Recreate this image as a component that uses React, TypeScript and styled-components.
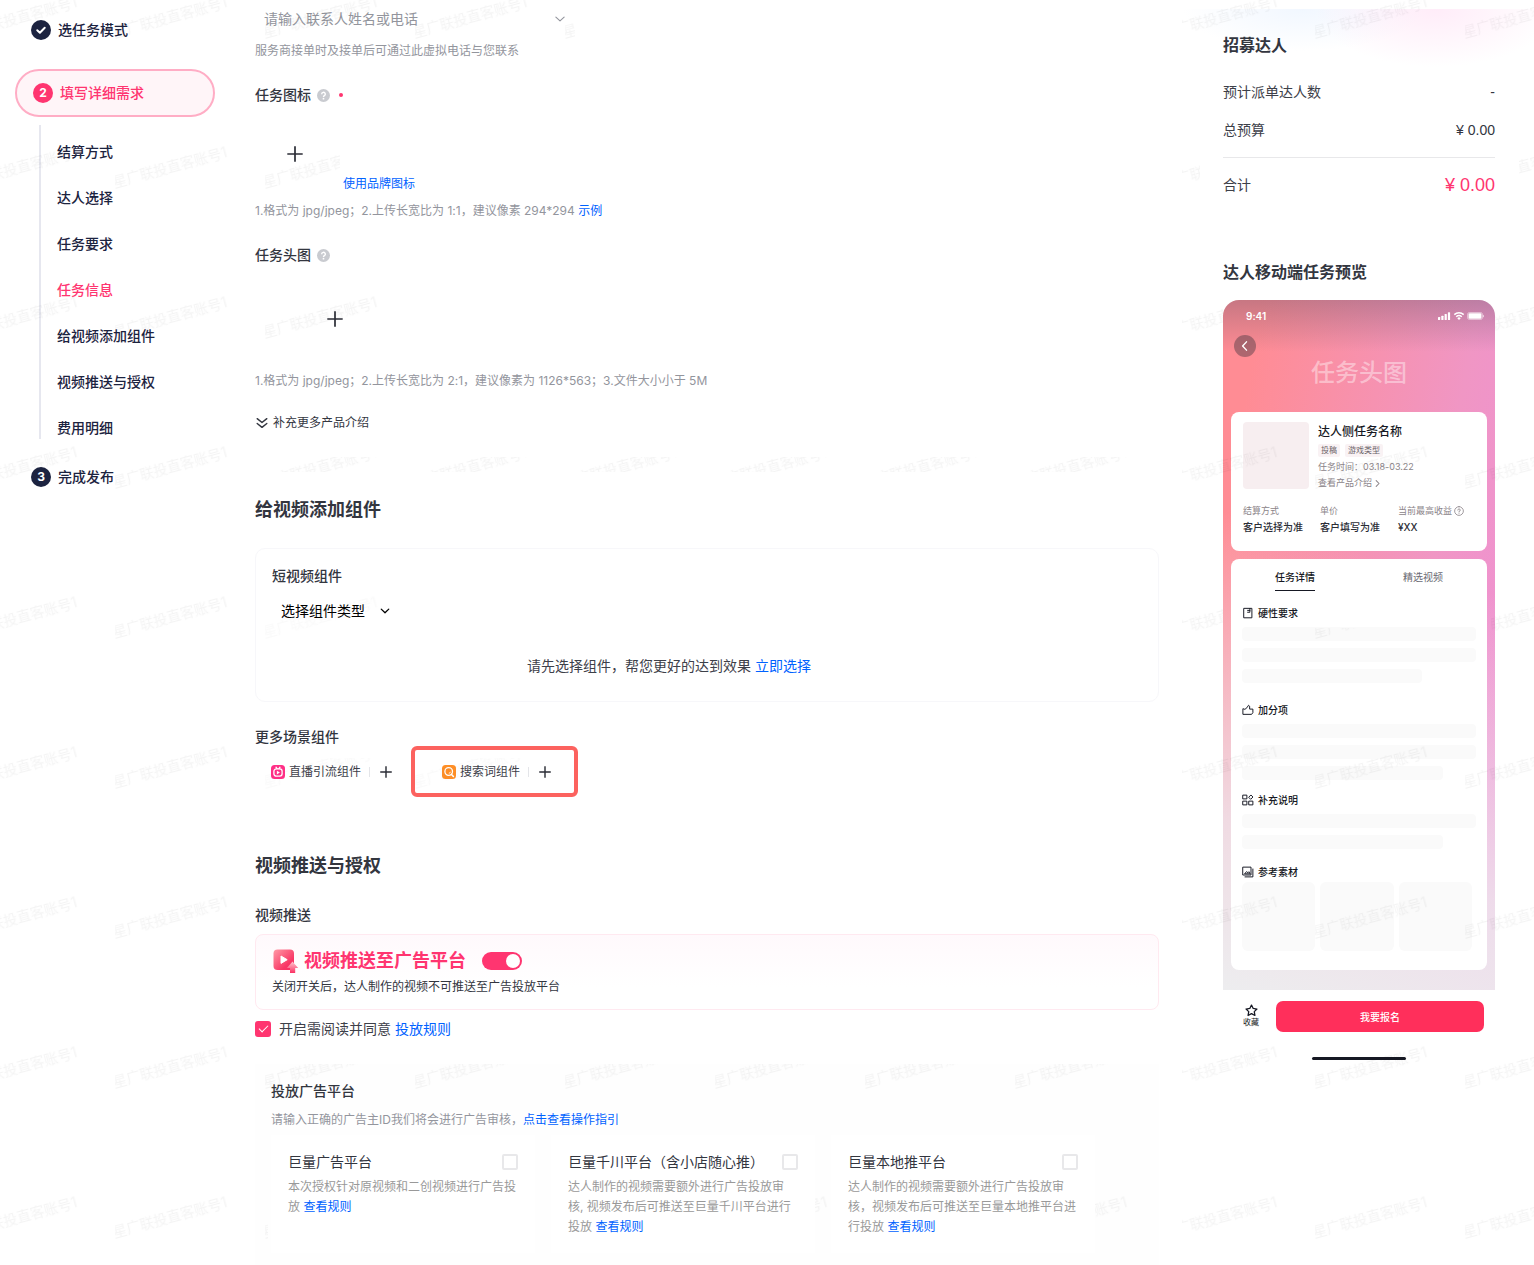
import React, { useState } from "react";
import styled, { createGlobalStyle, css } from "styled-components";

const C = {
  ink: "#1c2340",
  text: "#33363f",
  body: "#3d4049",
  muted: "#93959d",
  gray: "#999999",
  pink: "#ff3570",
  blue: "#0062ff",
  block: "#fafafa",
};

const GlobalStyle = createGlobalStyle`
  * { box-sizing: border-box; }
  body {
    margin: 0;
    background: #fff;
    color: ${C.text};
    font-family: Inter, "Noto Sans CJK SC", sans-serif;
    font-size: 14px;
    font-variant-ligatures: no-contextual;
    line-height: 22px;
  }
  h1, h2, h3, h4, p, ul, ol, dl, dd { margin: 0; padding: 0; }
  ul, ol { list-style: none; }
  button, select, input { font: inherit; color: inherit; }
  button { border: 0; padding: 0; background: none; cursor: pointer; }
  a { color: ${C.blue}; text-decoration: none; }
  svg { display: block; flex: none; }
`;

const Page = styled.div`
  position: relative;
  overflow: hidden;
  display: grid;
  grid-template-columns: 240px minmax(0, 1fr) 351px;
  align-items: start;
`;

/* ---------- Watermark ---------- */

const MarkLayer = styled.div`
  position: absolute;
  z-index: 2;
  top: -110px;
  left: -35px;
  display: grid;
  grid-template-columns: repeat(11, 150px);
  grid-auto-rows: 150px;
  pointer-events: none;
  user-select: none;
`;

const MarkCell = styled.div<{ $clip: string; $faint: boolean }>`
  display: flex;
  align-items: flex-end;
  clip-path: ${(p) => (p.$clip ? `inset(${p.$clip})` : "none")};
  color: #000;
  opacity: ${(p) => (p.$faint ? 0.02 : 0.045)};
  span {
    line-height: 16px;
    white-space: nowrap;
    transform: rotate(-15deg);
    transform-origin: left bottom;
    will-change: transform;
  }
`;

/* Cells of the form column that stay visible: "row-column" -> clip */
const FORM_MARKS: Record<string, string> = {
  "0-2": "0",
  "0-3": "0",
  "0-4": "0 140px 0 0",
  "1-2": "0 75px 0 0",
  "2-2": "0",
  "4-2": "0",
  "5-2": "118px 0 0 0",
  "5-3": "118px 0 0 0",
  "8-2": "0 147px 0 0",
  "8-5": "0 0 0 100px",
  "8-7": "0 0 0 80px",
};

const ASIDE_MARKS: Record<string, string> = {
  "1-8": "0 115px 0 17px",
  "1-9": "none",
  "1-10": "0 0 0 54px",
  "2-8": "0 92px 0 17px",
  "2-9": "none",
  "2-10": "0 0 0 30px",
  "4-8": "0 92px 0 17px",
  "4-9": "138px 0 0 0",
  "4-10": "0 0 0 26px",
};

function markClip(row: number, col: number): string | null {
  if (col < 2) return "0";
  const key = `${row}-${col}`;
  if (col < 8) {
    if (row === 3) return "117px 0 18px 0";
    if (row === 7) return "124px 0 0 0";
    return FORM_MARKS[key] ?? null;
  }
  const own = ASIDE_MARKS[key];
  if (own) return own === "none" ? null : own;
  return col === 8 ? "0 0 0 17px" : "0";
}

function Watermark() {
  const cells = [];
  for (let row = 0; row < 9; row++) {
    for (let col = 0; col < 11; col++) {
      const clip = markClip(row, col);
      cells.push(
        <MarkCell key={`${row}-${col}`} $clip={clip ?? ""} $faint={col > 1 && (row === 4 || row === 5) && col < 8}>
          {clip !== null && <span>星广联投直客账号1</span>}
        </MarkCell>
      );
    }
  }
  return <MarkLayer aria-hidden="true">{cells}</MarkLayer>;
}

/* ---------- Sidebar ---------- */

const Sidebar = styled.nav`
  padding: 19px 25px 0 15px;
  color: ${C.ink};
  font-weight: 500;
`;

const Step = styled.div<{ $last?: boolean }>`
  display: flex;
  align-items: center;
  gap: 7px;
  padding-left: 16px;
  margin-top: ${(p) => (p.$last ? 27 : 0)}px;
`;

const ActiveStep = styled(Step)`
  height: 48px;
  margin: 28px 0 8px;
  border: 2px solid #ffadc5;
  border-radius: 24px;
  background: #fff5f8;
  color: ${C.pink};
`;

const StepBadge = styled.span<{ $active?: boolean }>`
  display: grid;
  place-items: center;
  width: 20px;
  height: 20px;
  border-radius: 50%;
  background: ${(p) => (p.$active ? C.pink : C.ink)};
  color: #fff;
  font-size: 12px;
  font-weight: 700;
  line-height: 20px;
`;

const SubSteps = styled.ul`
  display: grid;
  gap: 24px;
  margin-left: 24px;
  padding: 16px 0 0 16px;
  border-left: 2px solid #e6e7ef;
`;

const SubLink = styled.a<{ $active?: boolean }>`
  color: ${(p) => (p.$active ? C.pink : C.ink)};
`;

const SUB_STEPS = ["结算方式", "达人选择", "任务要求", "任务信息", "给视频添加组件", "视频推送与授权", "费用明细"];

/* ---------- Form ---------- */

const Main = styled.main`
  display: grid;
  gap: 16px;
  padding: 0 24px 12px 15px;
`;

const Section = styled.section<{ $first?: boolean }>`
  padding: ${(p) => (p.$first ? "3px 0 22px" : "25px 0 24px")};
`;

const LastSection = styled(Section)`
  padding-bottom: 0;
`;

const SectionTitle = styled.h2`
  font-size: 18px;
  line-height: 26px;
  font-weight: 700;
`;

const Label = styled.h3<{ $top?: number }>`
  display: flex;
  align-items: center;
  gap: 6px;
  margin-top: ${(p) => p.$top ?? 0}px;
  font-size: 14px;
  font-weight: 500;
`;

const RequiredDot = styled.i`
  width: 4px;
  height: 4px;
  margin-left: 3px;
  border-radius: 50%;
  background: ${C.pink};
`;

const Picker = styled.label<{ $wide?: boolean }>`
  display: flex;
  align-items: center;
  width: ${(p) => (p.$wide ? "320px" : "128px")};
  height: 32px;
  padding: 0 9px;
  margin-top: ${(p) => (p.$wide ? 0 : 8)}px;
  color: ${(p) => (p.$wide ? C.muted : "#000")};
  select {
    flex: 1;
    min-width: 0;
    border: 0;
    padding: 0;
    background: none;
    appearance: none;
    outline: none;
  }
`;

const Hint = styled.p<{ $top?: number }>`
  margin-top: ${(p) => p.$top ?? 0}px;
  color: ${C.muted};
  font-size: 12px;
  line-height: 20px;
`;

const UploadRow = styled.div`
  display: flex;
  align-items: flex-end;
  gap: 8px;
  margin: 8px 0 7px;
  font-size: 12px;
  line-height: 20px;
`;

const UploadBox = styled.button<{ $banner?: boolean }>`
  display: grid;
  place-items: center;
  width: ${(p) => (p.$banner ? 160 : 80)}px;
  height: ${(p) => (p.$banner ? 90 : 80)}px;
`;

const MoreToggle = styled.button`
  display: flex;
  align-items: center;
  gap: 4px;
  margin-top: 21px;
  font-size: 12px;
  line-height: 22px;
`;

const ComponentCard = styled.div`
  margin-top: 25px;
  padding: 16px;
  border: 1px solid #f7f7fa;
  border-radius: 10px;
`;

const EmptyLine = styled.p`
  max-width: 794px;
  padding: 28px 0 8px;
  color: ${C.body};
  text-align: center;
`;

const ChipRow = styled.div`
  display: flex;
  gap: 18px;
  margin-top: 8px;
`;

const Chip = styled.div`
  position: relative;
  display: flex;
  align-items: center;
  height: 32px;
  padding: 0 16px;
  color: ${C.body};
  font-size: 12px;
  > span { margin-left: 4px; }
  > i {
    width: 1px;
    height: 10px;
    margin: 0 10px 0 8px;
    background: #e4e5e9;
  }
`;

const FocusFrame = styled.div`
  position: absolute;
  inset: -10px -11px -9px -15px;
  border: 4px solid #fc625f;
  border-radius: 6px;
  pointer-events: none;
`;

const PushCard = styled.div`
  margin-top: 8px;
  padding: 13px 16px 12px;
  border: 1px solid #ffe9f0;
  border-radius: 8px;
  background: linear-gradient(180deg, #fff9fc, #fff 70%);
  p {
    margin-top: 3px;
    color: ${C.text};
    font-size: 12px;
    line-height: 20px;
  }
`;

const PushTitle = styled.div`
  display: flex;
  align-items: center;
  gap: 5px;
  h4 {
    color: ${C.pink};
    font-size: 18px;
    line-height: 26px;
    font-weight: 700;
  }
`;

const Switch = styled.input`
  appearance: none;
  width: 40px;
  height: 18px;
  margin: 0 0 0 11px;
  padding: 2px;
  border-radius: 9px;
  background: #d0d2d8;
  cursor: pointer;
  &::before {
    content: "";
    display: block;
    width: 14px;
    height: 14px;
    border-radius: 50%;
    background: #fff;
  }
  &:checked { background: ${C.pink}; }
  &:checked::before { margin-left: 22px; }
`;

const Tick = styled.input`
  appearance: none;
  flex: none;
  display: grid;
  place-items: center;
  width: 16px;
  height: 16px;
  margin: 0;
  border: 2px solid #e8e8ea;
  border-radius: 2px;
  background: #fff;
  &:checked {
    border-radius: 3px;
    border-color: ${C.pink};
    background: ${C.pink};
  }
  &:checked::before {
    content: "";
    width: 8px;
    height: 4px;
    margin-bottom: 3px;
    border: solid #fff;
    border-width: 0 0 1px 1px;
    transform: rotate(-45deg);
  }
`;

const Agreement = styled.div`
  display: flex;
  align-items: center;
  gap: 8px;
  margin-top: 8px;
  color: ${C.body};
  a { margin-left: 4px; }
`;

const PlatformPanel = styled.div`
  margin-top: 24px;
  padding: 16px 16px 12px;
  background: #fefefe;
`;

const PlatformGrid = styled.div`
  display: grid;
  grid-template-columns: repeat(auto-fill, 264px);
  gap: 16px;
  margin-top: 5px;
`;

const PlatformCard = styled.article`
  padding: 16px 17px;
  background: #fff;
  label {
    display: flex;
    align-items: center;
    justify-content: space-between;
    white-space: nowrap;
  }
  p {
    margin-top: 4px;
    color: ${C.gray};
    font-size: 12px;
    line-height: 20px;
  }
`;

const PLATFORMS = [
  { name: "巨量广告平台", desc: "本次授权针对原视频和二创视频进行广告投放" },
  { name: "巨量千川平台（含小店随心推）", desc: "达人制作的视频需要额外进行广告投放审核, 视频发布后可推送至巨量千川平台进行投放" },
  { name: "巨量本地推平台", desc: "达人制作的视频需要额外进行广告投放审核，视频发布后可推送至巨量本地推平台进行投放" },
];

/* ---------- Right column ---------- */

const Aside = styled.aside`
  padding: 9px 39px 0 40px;
`;

const Budget = styled.section`
  margin: 0 -39px 0 -40px;
  padding: 24px 39px 0 40px;
  background:
    radial-gradient(ellipse 120px 58px at 72% 0, rgba(255, 226, 245, 0.65), rgba(255, 255, 255, 0) 100%),
    radial-gradient(ellipse 120px 42px at 34% 0, rgba(234, 243, 255, 0.65), rgba(255, 255, 255, 0) 100%);
`;

const AsideTitle = styled.h2`
  font-size: 16px;
  line-height: 24px;
  font-weight: 700;
`;

const Amounts = styled.dl`
  display: grid;
  gap: 16px;
  margin-top: 24px;
  padding-bottom: 16px;
  border-bottom: 1px solid #e8e8ea;
`;

const Amount = styled.div<{ $total?: boolean }>`
  display: flex;
  align-items: center;
  justify-content: space-between;
  margin-top: ${(p) => (p.$total ? 16 : 0)}px;
  color: ${C.body};
  dd {
    color: ${(p) => (p.$total ? C.pink : C.text)};
    font-family: "Liberation Sans", "Noto Sans CJK SC", sans-serif;
    font-size: ${(p) => (p.$total ? 18 : 14)}px;
    font-weight: 400;
  }
`;

const Preview = styled.section`
  margin-top: 64px;
`;

const Phone = styled.div`
  display: flex;
  flex-direction: column;
  margin-top: 16px;
  padding: 8px 8px 20px;
  border-radius: 16px 16px 0 0;
  background:
    linear-gradient(180deg, rgba(70, 70, 90, 0.3), rgba(70, 70, 90, 0) 52px),
    linear-gradient(197deg, rgba(240, 236, 240, 0) 38%, rgba(238, 232, 238, 0.85) 78%, #ededef 100%),
    linear-gradient(100deg, #ff8c94 10%, #f096c4 65%, #ef90d8 100%);
`;

const StatusBar = styled.div`
  display: flex;
  align-items: center;
  justify-content: space-between;
  height: 16px;
  padding: 0 3px 0 15px;
  color: #fff;
  font-size: 10px;
  line-height: 16px;
  font-weight: 600;
`;

const BackButton = styled.button`
  display: grid;
  place-items: center;
  width: 22px;
  height: 22px;
  margin: 11px 0 0 3px;
  border-radius: 50%;
  background: rgba(60, 50, 60, 0.42);
`;

const Banner = styled.div`
  height: 55px;
  color: rgba(255, 255, 255, 0.42);
  font-size: 24px;
  line-height: 32px;
  font-weight: 500;
  text-align: center;
`;

const WhiteCard = styled.div<{ $pad: string }>`
  padding: ${(p) => p.$pad};
  border-radius: 8px;
  background: #fff;
  & + & { margin-top: 8px; }
`;

const TaskHead = styled.div`
  display: flex;
  gap: 9px;
`;

const Thumb = styled.div`
  width: 66px;
  height: 67px;
  border-radius: 4px;
  background: #f7eef0;
`;

const TaskInfo = styled.div`
  display: grid;
  justify-items: start;
  height: 67px;
  padding-top: 1px;
  color: #8b8489;
  font-size: 9px;
  line-height: 16px;
  h3 {
    color: #161823;
    font-size: 12px;
    line-height: 18px;
    font-weight: 500;
  }
  a {
    display: flex;
    align-items: center;
    gap: 2px;
    color: #8b8489;
  }
`;

const Tags = styled.div`
  display: flex;
  gap: 5px;
  height: 18px;
  align-items: center;
  span {
    padding: 0 3px;
    border-radius: 2px;
    background: #f9f2f4;
    color: #6b6268;
    font-size: 8px;
    line-height: 13px;
  }
`;

const Stats = styled.dl`
  display: grid;
  grid-template-columns: 77px 78px 1fr;
  margin-top: 14px;
  dt {
    display: flex;
    align-items: center;
    gap: 2px;
    color: #8b8489;
    font-size: 9px;
    line-height: 16px;
    white-space: nowrap;
  }
  dd {
    color: #2b2d36;
    font-size: 10px;
    line-height: 17px;
    font-weight: 500;
  }
`;

const Tabs = styled.div`
  display: grid;
  grid-template-columns: 1fr 1fr;
  justify-items: center;
  margin: 0 -11px;
`;

const Tab = styled.button<{ $active?: boolean }>`
  height: 22px;
  border-bottom: 1px solid transparent;
  color: #6b6b73;
  font-size: 10px;
  line-height: 16px;
  padding-bottom: 5px;
  ${(p) =>
    p.$active &&
    css`
      border-color: #161823;
      color: #161823;
      font-weight: 500;
    `}
`;

const Block = styled.section<{ $top: number }>`
  margin-top: ${(p) => p.$top}px;
  h4 {
    display: flex;
    align-items: center;
    gap: 4px;
    color: #161823;
    font-size: 10px;
    line-height: 16px;
    font-weight: 500;
  }
`;

const Bars = styled.div`
  display: grid;
  gap: 7px;
  margin-top: 6px;
`;

const Bar = styled.div<{ $width: string }>`
  width: ${(p) => p.$width};
  height: 14px;
  border-radius: 4px;
  background: ${C.block};
`;

const Materials = styled.div`
  display: grid;
  grid-template-columns: repeat(3, 1fr);
  gap: 5px;
  margin: 2px 4px 0 0;
  div {
    height: 69px;
    border-radius: 6px;
    background: ${C.block};
  }
`;

const ApplyBar = styled.div`
  display: flex;
  align-items: center;
  gap: 16px;
  padding: 11px 11px 0 19px;
`;

const Favorite = styled.button`
  display: grid;
  justify-items: center;
  width: 18px;
  padding-bottom: 2px;
  color: #161823;
  font-size: 8px;
  line-height: 10px;
  white-space: nowrap;
`;

const ApplyButton = styled.button`
  flex: 1;
  height: 31px;
  border-radius: 7px;
  background: #ff2f5b;
  color: #fff;
  font-size: 10px;
  font-weight: 500;
`;

const HomeBar = styled.div`
  width: 94px;
  height: 3px;
  margin: 25px auto 0;
  border-radius: 2px;
  background: #161823;
`;

/* ---------- Icons ---------- */

const Stroke = ({ size, d, w = 1.3, color = "currentColor" }: { size: number; d: string; w?: number; color?: string }) => (
  <svg width={size} height={size} viewBox="0 0 16 16" fill="none" stroke={color} strokeWidth={w} strokeLinecap="round" strokeLinejoin="round" aria-hidden="true">
    <path d={d} />
  </svg>
);

const Plus = ({ size, color = "#2b2d36" }: { size: number; color?: string }) => (
  <svg width={size} height={size} viewBox="0 0 16 16" stroke={color} strokeWidth={size > 14 ? 1.7 : 1.9} aria-hidden="true">
    <path d="M8 .3v15.4M.3 8h15.4" />
  </svg>
);

const HelpIcon = () => (
  <svg width="13" height="13" viewBox="0 0 13 13" aria-hidden="true">
    <circle cx="6.5" cy="6.5" r="6.5" fill="#c9cbd0" />
    <path d="M4.7 5.2a1.8 1.8 0 1 1 2.7 1.5c-.6.4-.9.6-.9 1.2" fill="none" stroke="#fff" strokeWidth="1.4" />
    <circle cx="6.5" cy="9.7" r=".9" fill="#fff" />
  </svg>
);

const LiveIcon = () => (
  <svg width="14" height="14" viewBox="0 0 14 14" aria-hidden="true">
    <rect width="14" height="14" rx="3.5" fill="#ff2f86" />
    <path d="M5 2.2 6 3.6M9 2.2 8 3.6" stroke="#fff" strokeWidth="1.3" strokeLinecap="round" />
    <rect x="2.9" y="3.9" width="8.2" height="7.3" rx="2.4" fill="none" stroke="#fff" strokeWidth="1.3" />
    <path d="M5.9 5.7v3.7l3-1.85z" fill="#fff" />
  </svg>
);

const SearchIcon = () => (
  <svg width="14" height="14" viewBox="0 0 14 14" aria-hidden="true">
    <rect width="14" height="14" rx="3.5" fill="#ff8f26" />
    <circle cx="6.7" cy="6.5" r="3.8" fill="none" stroke="#fff" strokeWidth="1.3" />
    <path d="m9.5 9.4 1.9 2.1" stroke="#fff" strokeWidth="1.5" strokeLinecap="round" />
    <path d="M6.8 8.3a1.8 1.8 0 0 0 1.7-1.5" fill="none" stroke="#fff" strokeWidth=".8" />
  </svg>
);

const PushIcon = () => (
  <svg width="27" height="26" viewBox="0 0 27 26" aria-hidden="true">
    <defs>
      <linearGradient id="pushBody" x1="0" y1="0" x2="1" y2="1">
        <stop offset="0" stopColor="#ff9aa6" />
        <stop offset="0.7" stopColor="#f93766" />
        <stop offset="1" stopColor="#f92f63" />
      </linearGradient>
      <linearGradient id="pushArrow" x1="0" y1="0" x2="0" y2="1">
        <stop offset="0" stopColor="#ffc9d2" />
        <stop offset="1" stopColor="#fb2f62" />
      </linearGradient>
    </defs>
    <rect x="1.5" y="1.5" width="20.5" height="20.5" rx="4" fill="url(#pushBody)" />
    <path d="M9 8v7.4l6.2-3.7z" fill="#fff" stroke="#fff" strokeLinejoin="round" />
    <path d="m20.5 13.5 5.7 6.4h-3V25h-5.2v-5.1h-3z" fill="url(#pushArrow)" />
  </svg>
);

const StatusIcons = () => (
  <svg width="48" height="10" viewBox="0 0 48 10" fill="#fff" aria-hidden="true">
    <rect x="2" y="6" width="2.2" height="3" rx=".6" />
    <rect x="5.3" y="4.7" width="2.2" height="4.3" rx=".6" />
    <rect x="8.6" y="3" width="2.2" height="6" rx=".6" />
    <rect x="11.9" y="1.2" width="2.2" height="7.8" rx=".6" />
    <path d="M18.3 3.6a7 7 0 0 1 9.4 0M20.2 5.8a4.2 4.2 0 0 1 5.6 0" fill="none" stroke="#fff" strokeWidth="1.5" />
    <path d="m23 9 1.7-1.8a2.4 2.4 0 0 0-3.4 0z" />
    <rect x="31.5" y="1.5" width="15" height="7" rx="2" fill="none" stroke="#fff" strokeOpacity=".45" />
    <rect x="32.5" y="2.3" width="13" height="5.4" rx="1.2" />
    <rect x="47" y="3.8" width="1" height="2.4" rx=".5" opacity=".6" />
  </svg>
);

const DOC = "M2.8 1.8h10.4v12.6H2.800zM7.500 4.500h3M7.500 7h3V2";
const THUMB = "M1.2 6.800v7h11.600l1.700-2.300V6.800h-4.300V3L8.700 1.700 6.500 5 4.300 6.800z";
const GRID = "M1.5 1.500h5v5h-5zM9.300 4l2.600-2.700L14.600 4l-2.700 2.700zM1.500 9.500h5v5h-5zM9.500 9.500h5v5h-5z";
const IMAGES = "M1.5 1.500h10.500v10.500H1.500zM14.500 4v10.500H4M3.800 10l2.400-2.600 1.600 1.700 1.400-1.500 1.400 2.400z";
const STAR = "m8 1.3 2.1 4.2 4.6.7-3.3 3.200.8 4.700-4.200-2.200-4.200 2.200.8-4.700L1.300 6.200l4.600-.7z";

/* ---------- Parts ---------- */

function Steps() {
  return (
    <Sidebar aria-label="发布步骤">
      <Step>
        <StepBadge>
          <Stroke size={12} w={2.6} d="m3 8.300 3.500 3.400L13 5" />
        </StepBadge>
        选任务模式
      </Step>
      <ActiveStep>
        <StepBadge $active>2</StepBadge>
        填写详细需求
      </ActiveStep>
      <SubSteps>
        {SUB_STEPS.map((name) => (
          <li key={name}>
            <SubLink href="#" $active={name === "任务信息"}>{name}</SubLink>
          </li>
        ))}
      </SubSteps>
      <Step $last>
        <StepBadge>3</StepBadge>
        完成发布
      </Step>
    </Sidebar>
  );
}

function PhonePreview() {
  return (
    <>
      <Phone>
        <StatusBar>
          9:41
          <StatusIcons />
        </StatusBar>
        <BackButton aria-label="返回">
          <Stroke size={12} w={1.9} color="#fff" d="M10 2.500 4.800 8l5.200 5.500" />
        </BackButton>
        <Banner>任务头图</Banner>
        <WhiteCard $pad="10px 12px 15px">
          <TaskHead>
            <Thumb />
            <TaskInfo>
              <h3>达人侧任务名称</h3>
              <Tags>
                <span>投稿</span>
                <span>游戏类型</span>
              </Tags>
              <div>任务时间：03.18-03.22</div>
              <a href="#">
                查看产品介绍
                <Stroke size={7} w={2.4} d="m5 1.500 6.500 6.500L5 14.500" />
              </a>
            </TaskInfo>
          </TaskHead>
          <Stats>
            <div>
              <dt>结算方式</dt>
              <dd>客户选择为准</dd>
            </div>
            <div>
              <dt>单价</dt>
              <dd>客户填写为准</dd>
            </div>
            <div>
              <dt>
                当前最高收益
                <Stroke size={10} d="M8 1a7 7 0 1 1 0 14A7 7 0 0 1 8 1zM6 6.500A2 2 0 1 1 8 8.600v.8M8 11.500v.2" />
              </dt>
              <dd>¥XX</dd>
            </div>
          </Stats>
        </WhiteCard>
        <WhiteCard $pad="10px 11px 19px">
          <Tabs>
            <Tab $active>任务详情</Tab>
            <Tab>精选视频</Tab>
          </Tabs>
          <Block $top={14}>
            <h4><Stroke size={12} d={DOC} />硬性要求</h4>
            <Bars>
              <Bar $width="100%" />
              <Bar $width="100%" />
              <Bar $width="77%" />
            </Bars>
          </Block>
          <Block $top={19}>
            <h4><Stroke size={12} d={THUMB} />加分项</h4>
            <Bars>
              <Bar $width="100%" />
              <Bar $width="100%" />
              <Bar $width="86%" />
            </Bars>
          </Block>
          <Block $top={12}>
            <h4><Stroke size={12} d={GRID} />补充说明</h4>
            <Bars>
              <Bar $width="100%" />
              <Bar $width="86%" />
            </Bars>
          </Block>
          <Block $top={15}>
            <h4><Stroke size={12} d={IMAGES} />参考素材</h4>
            <Materials>
              <div />
              <div />
              <div />
            </Materials>
          </Block>
        </WhiteCard>
      </Phone>
      <ApplyBar>
        <Favorite>
          <Stroke size={13} w={1.6} d={STAR} />
          收藏
        </Favorite>
        <ApplyButton>我要报名</ApplyButton>
      </ApplyBar>
      <HomeBar />
    </>
  );
}

export default function App() {
  const [push, setPush] = useState(true);
  const [agreed, setAgreed] = useState(true);

  return (
    <Page>
      <GlobalStyle />
      <Steps />
      <Main>
        <Section $first>
          <Picker $wide>
            <select aria-label="联系人">
              <option>请输入联系人姓名或电话</option>
            </select>
            <Stroke size={12} w={1.5} d="m2.500 5.500 5.500 5 5.500-5" />
          </Picker>
          <Hint $top={6}>服务商接单时及接单后可通过此虚拟电话与您联系</Hint>
          <Label $top={23}>
            任务图标 <HelpIcon />
            <RequiredDot />
          </Label>
          <UploadRow>
            <UploadBox aria-label="上传任务图标"><Plus size={16} /></UploadBox>
            <a href="#">使用品牌图标</a>
          </UploadRow>
          <Hint>
            1.格式为 jpg/jpeg；2.上传长宽比为 1:1，建议像素 294*294 <a href="#">示例</a>
          </Hint>
          <Label $top={23}>
            任务头图 <HelpIcon />
          </Label>
          <UploadRow>
            <UploadBox $banner aria-label="上传任务头图"><Plus size={16} /></UploadBox>
          </UploadRow>
          <Hint>1.格式为 jpg/jpeg；2.上传长宽比为 2:1，建议像素为 1126*563；3.文件大小小于 5M</Hint>
          <MoreToggle>
            <Stroke size={14} w={1.6} d="m2.500 3 5.500 4.500L13.500 3M2.500 8.500 8 13l5.500-4.500" />
            补充更多产品介绍
          </MoreToggle>
        </Section>

        <Section>
          <SectionTitle>给视频添加组件</SectionTitle>
          <ComponentCard>
            <Label>短视频组件</Label>
            <Picker>
              <select aria-label="组件类型">
                <option>选择组件类型</option>
              </select>
              <Stroke size={12} w={1.7} d="m3 5.500 5 4.800 5-4.800" />
            </Picker>
            <EmptyLine>
              请先选择组件，帮您更好的达到效果 <a href="#">立即选择</a>
            </EmptyLine>
          </ComponentCard>
          <Label $top={24}>更多场景组件</Label>
          <ChipRow>
            <Chip>
              <LiveIcon />
              <span>直播引流组件</span>
              <i />
              <button aria-label="添加直播引流组件"><Plus size={12} /></button>
            </Chip>
            <Chip>
              <SearchIcon />
              <span>搜索词组件</span>
              <i />
              <button aria-label="添加搜索词组件"><Plus size={12} /></button>
              <FocusFrame />
            </Chip>
          </ChipRow>
        </Section>

        <LastSection>
          <SectionTitle>视频推送与授权</SectionTitle>
          <Label $top={25}>视频推送</Label>
          <PushCard>
            <PushTitle>
              <PushIcon />
              <h4>视频推送至广告平台</h4>
              <Switch type="checkbox" role="switch" aria-label="视频推送至广告平台" checked={push} onChange={() => setPush(!push)} />
            </PushTitle>
            <p>关闭开关后，达人制作的视频不可推送至广告投放平台</p>
          </PushCard>
          <Agreement>
            <Tick id="agree" type="checkbox" checked={agreed} onChange={() => setAgreed(!agreed)} />
            <span>
              <label htmlFor="agree">开启需阅读并同意</label>
              <a href="#">投放规则</a>
            </span>
          </Agreement>
          <PlatformPanel>
            <Label>投放广告平台</Label>
            <Hint $top={8}>
              请输入正确的广告主ID我们将会进行广告审核，<a href="#">点击查看操作指引</a>
            </Hint>
            <PlatformGrid>
              {PLATFORMS.map((item) => (
                <PlatformCard key={item.name}>
                  <label>
                    {item.name}
                    <Tick type="checkbox" />
                  </label>
                  <p>
                    {item.desc} <a href="#">查看规则</a>
                  </p>
                </PlatformCard>
              ))}
            </PlatformGrid>
          </PlatformPanel>
        </LastSection>
      </Main>

      <Aside>
        <Budget>
          <AsideTitle>招募达人</AsideTitle>
          <Amounts>
            <Amount>
              <dt>预计派单达人数</dt>
              <dd>-</dd>
            </Amount>
            <Amount>
              <dt>总预算</dt>
              <dd>¥ 0.00</dd>
            </Amount>
          </Amounts>
          <Amount as="dl" $total>
            <dt>合计</dt>
            <dd>¥ 0.00</dd>
          </Amount>
        </Budget>
        <Preview>
          <AsideTitle>达人移动端任务预览</AsideTitle>
          <PhonePreview />
        </Preview>
      </Aside>
      <Watermark />
    </Page>
  );
}
